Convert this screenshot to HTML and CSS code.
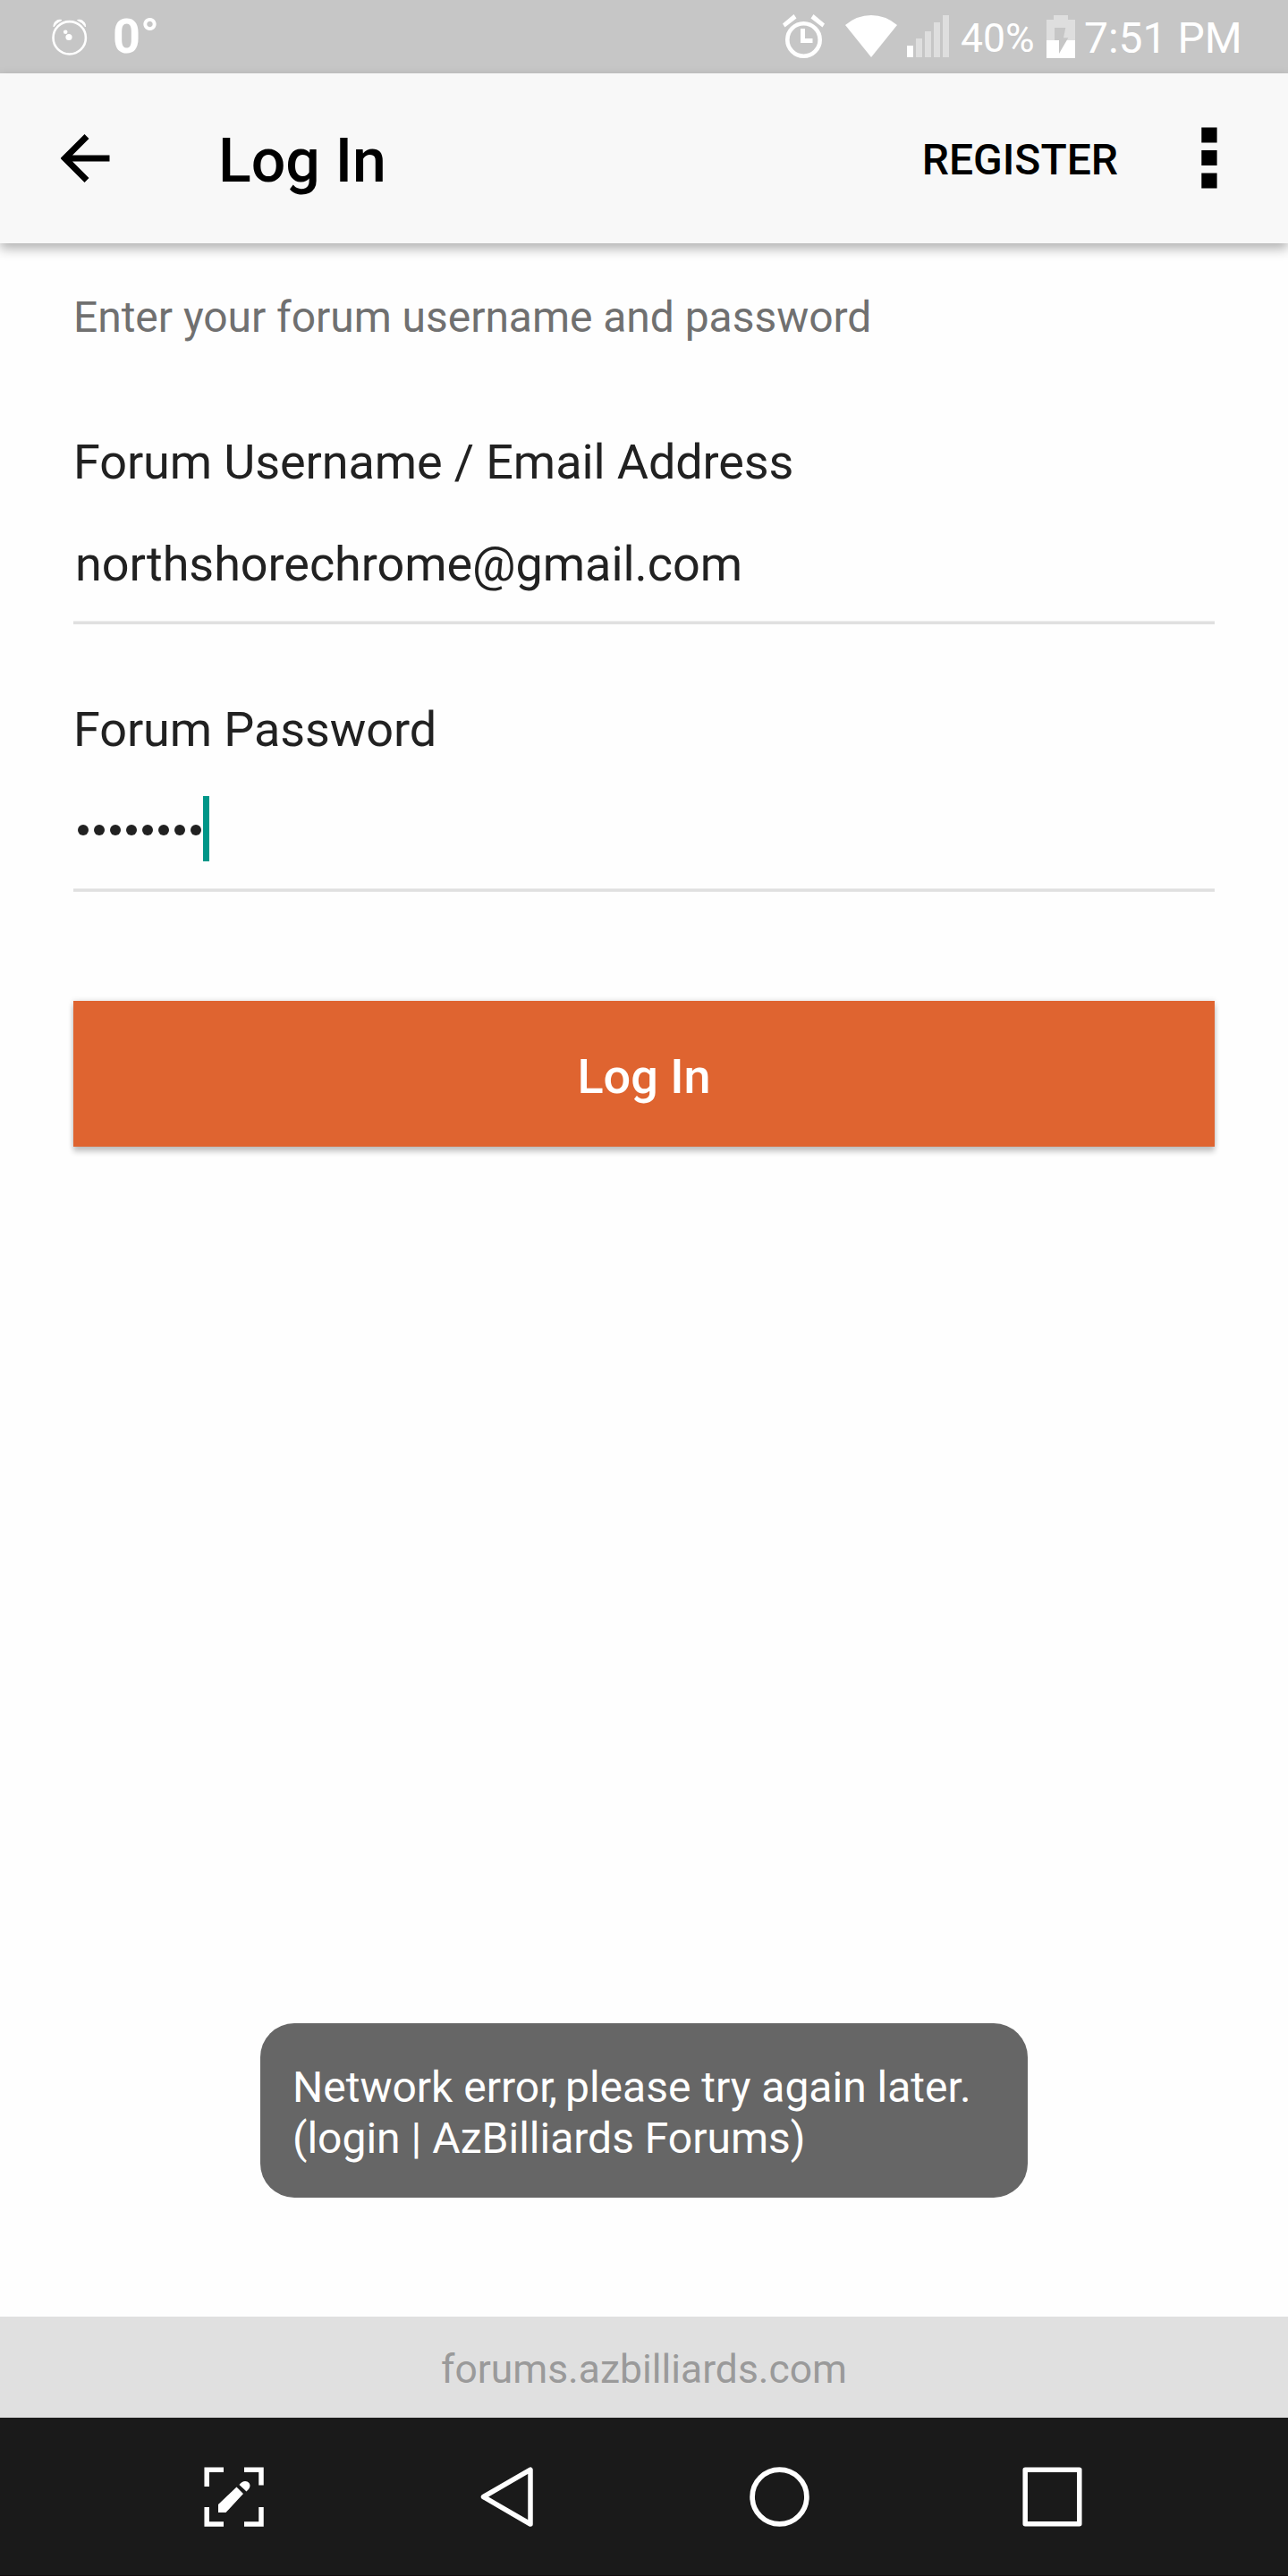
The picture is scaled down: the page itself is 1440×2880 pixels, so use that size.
FILE: index.html
```html
<!DOCTYPE html>
<html lang="en">
<head>
    <meta charset="UTF-8">
    <meta name="viewport" content="width=device-width, initial-scale=1.0">
    <title>Log In</title>
    <link rel="stylesheet" href="styles.css">
</head>
<body>

    <div class="screen">

        <div class="status-bar">
            <svg class="clock-icon" width="40" height="46" viewBox="0 0 40 46">
                <path d="M2 12 A7 7 0 0 1 11 4.500 Q5 7 2 12Z M37.500 12 A7 7 0 0 0 28.500 4.500 Q34.500 7 37.500 12Z" fill="#fff" stroke="#fff" />
                <circle cx="19.700" cy="24.300" r="18.200" fill="none" stroke="#fff" stroke-width="2.600" />
                <circle cx="19" cy="23.500" r="3.600" fill="#fff" />
                <circle cx="15.200" cy="17.800" r="2.300" fill="#fff" />
            </svg>
            <span class="temperature">0°</span>

            <div class="status-right">
                <svg class="alarm-icon" width="48" height="50" viewBox="0 0 48 50">
                    <circle cx="23.500" cy="28.500" r="18.200" fill="none" stroke="#fff" stroke-width="4.600" />
                    <path d="M20 16h5v11h8.500v5H20z" fill="#fff" />
                    <path d="M0 10.500L12.500 0 15.500 4.500 2.500 14.500z M47 10.500L34.500 0 31.500 4.500 44.500 14.500z" fill="#fff" />
                </svg>
                <svg class="wifi-icon" width="60" height="48" viewBox="0 0 60 48">
                    <path d="M0 11 Q13 0 29 0 Q45 0 58 11 L29 47z" fill="#fff" />
                </svg>
                <svg class="signal-icon" width="48" height="47" viewBox="0 0 48 47">
                    <path d="M0 34h7v13H0z" fill="#fff" />
                    <path d="M10 26h7v21h-7z M20 18h7v29h-7z M30 8h7v39h-7z M40 0h7v47h-7z" fill="#dedede" />
                </svg>
                <span class="battery-text">40%</span>
                <svg class="battery-icon" width="32" height="48" viewBox="0 0 32 48">
                    <path d="M8 0h16v5h8v23H0V5h8z" fill="#dedede" />
                    <path d="M0 28h32v20H0z" fill="#fff" />
                    <path d="M9 14h12.300L19 25.300h5.300L14 43V28H9z" fill="#c6c6c6" />
                </svg>
                <span class="time">7:51 PM</span>
            </div>
        </div>

        <div class="app-bar">
            <svg class="back-icon" width="56" height="56" viewBox="0 0 56 56">
                <path d="M29 3.500L4.500 28 29 52.500M5 28H54.500" fill="none" stroke="#000" stroke-width="7" />
            </svg>
            <h1>Log In</h1>
            <span class="register">REGISTER</span>
            <svg class="menu-icon" width="18" height="70" viewBox="0 0 18 70">
                <path d="M.300 .500h17.300v17H.300z M.300 26h17.300v17H.300z M.300 51.500h17.300v17H.300z" fill="#000" />
            </svg>
        </div>

        <div class="content">
            <p class="hint">Enter your forum username and password</p>

            <div class="field">
                <div class="label">Forum Username / Email Address</div>
                <div class="value">northshorechrome@gmail.com</div>
            </div>

            <div class="field">
                <div class="label">Forum Password</div>
                <div class="value password">
                    <i class="dot"></i><i class="dot"></i><i class="dot"></i><i class="dot"></i><i class="dot"></i><i class="dot"></i><i class="dot"></i><i class="dot"></i>
                    <span class="cursor"></span>
                </div>
            </div>

            <div class="login-button">Log In</div>

            <div class="toast">Network erro<span class="kern">r,</span> please try again later.<br>(login | AzBilliards Forums)</div>
        </div>

        <div class="site-bar">forums.azbilliards.com</div>

        <div class="nav-bar">
            <svg class="nav-icon" width="68" height="68" viewBox="0 0 68 68">
                <path d="M22 3.200H3.200V22 M45 3.200H64V20.500 M3.200 45V64H22 M45 64H64V45" fill="none" stroke="#fff" stroke-width="5.500" />
                <path d="M16 42L36.500 22.500 44 30 24.500 51H16z M39.500 20C43 15 48 15 50.500 18 C52.500 21 51.500 24 47.500 27.500z" fill="#fff" />
            </svg>
            <svg class="nav-icon" width="68" height="68" viewBox="0 0 68 68">
                <path d="M7.500 33.500L60 3.200V64z" fill="none" stroke="#fff" stroke-width="5.500" stroke-linejoin="round" />
            </svg>
            <svg class="nav-icon" width="68" height="68" viewBox="0 0 68 68">
                <circle cx="33.500" cy="33.500" r="30.400" fill="none" stroke="#fff" stroke-width="5.700" />
            </svg>
            <svg class="nav-icon" width="68" height="68" viewBox="0 0 68 68">
                <rect x="3.200" y="3.200" width="60.600" height="60.600" fill="none" stroke="#fff" stroke-width="5.500" stroke-linejoin="round" />
            </svg>
        </div>

    </div>

</body>
</html>
```
FILE: styles.css
```css
* {
    margin: 0;
    padding: 0;
    box-sizing: border-box;
}

body {
    font-family: Roboto, 'Liberation Sans', sans-serif;
    background-color: #fefefe;
    color: #212121;
}

svg {
    display: block;
    flex-shrink: 0;
}

.screen {
    width: 1440px;
    height: 2880px;
    display: flex;
    flex-direction: column;
}

.status-bar {
    height: 82px;
    background-color: #c6c6c6;
    color: #ffffff;
    display: flex;
    align-items: flex-start;
    padding-left: 58px;
}

.clock-icon {
    margin-top: 18px;
}

.temperature {
    font-size: 54px;
    font-weight: 700;
    line-height: 82px;
    margin-left: 28px;
}

.status-right {
    display: flex;
    align-items: flex-start;
    width: 565px;
    margin-left: auto;
    white-space: nowrap;
}

.alarm-icon {
    margin-top: 16px;
}

.wifi-icon {
    margin: 17px 0 0 22px;
}

.signal-icon {
    margin: 17px 0 0 9px;
}

.battery-text {
    font-size: 44.5px;
    line-height: 86px;
    width: 96px;
    margin-left: 12px;
}

.battery-icon {
    margin-top: 17px;
}

.time {
    font-size: 48px;
    line-height: 85px;
    margin-left: 10px;
}

.app-bar {
    height: 190px;
    background-color: #f8f8f8;
    color: #000000;
    display: flex;
    align-items: center;
    padding: 0 79px 0 68px;
    box-shadow: 0 6px 12px rgba(0, 0, 0, 0.3);
}

.app-bar h1 {
    font-size: 68px;
    font-weight: 500;
    line-height: 80px;
    margin-left: 120px;
    margin-top: 6px;
}

.register {
    font-size: 48px;
    font-weight: 500;
    margin-left: auto;
    margin-top: 3px;
}

.menu-icon {
    margin-left: 93px;
}

.content {
    flex: 1;
    padding: 51px 82px 0;
    position: relative;
}

.hint {
    font-size: 48px;
    line-height: 64px;
    letter-spacing: -0.04px;
    color: #707070;
    margin-bottom: 97px;
}

.field {
    height: 299px;
}

.label {
    font-size: 54px;
    line-height: 66px;
    letter-spacing: -0.1px;
}

.value {
    font-size: 54px;
    line-height: 66px;
    letter-spacing: -0.06px;
    height: 134px;
    padding: 34px 0 0 2px;
    margin-top: 14px;
    border-bottom: 3px solid #e0e0e0;
    box-shadow: inset 0 -1px 0 #eeeeee;
}

.password {
    display: flex;
    padding: 27px 0 0 5px;
}

.dot {
    width: 12px;
    height: 12px;
    border-radius: 50%;
    background-color: #212121;
    margin: 32px 6px 0 0;
}

.cursor {
    width: 7px;
    height: 73px;
    background-color: #009688;
    margin-left: -4px;
}

.login-button {
    height: 163px;
    background-color: #df6430;
    color: #ffffff;
    font-size: 54px;
    font-weight: 500;
    line-height: 169px;
    text-align: center;
    margin-top: 37px;
    box-shadow: 0 6px 6px rgba(0, 0, 0, 0.2), 0 0 6px rgba(0, 0, 0, 0.15);
}

/* floats over the page above the site bar */
.toast {
    position: absolute;
    left: 291px;
    bottom: 133px;
    width: 858px;
    height: 195px;
    background-color: #666666;
    color: #ffffff;
    border-radius: 38px;
    font-size: 48px;
    line-height: 57px;
    padding: 43px 36px;
    white-space: nowrap;
}

.kern {
    letter-spacing: -3px;
}

.site-bar {
    height: 113px;
    background-color: #e0e0e0;
    color: #9a9a9a;
    font-size: 44.4px;
    line-height: 118px;
    text-align: center;
}

.nav-bar {
    height: 177px;
    background-color: #1a1a1a;
    border-bottom: 1px solid #120a0d;
    display: flex;
    justify-content: space-between;
    padding: 55px 229px 0 228px;
}
```
